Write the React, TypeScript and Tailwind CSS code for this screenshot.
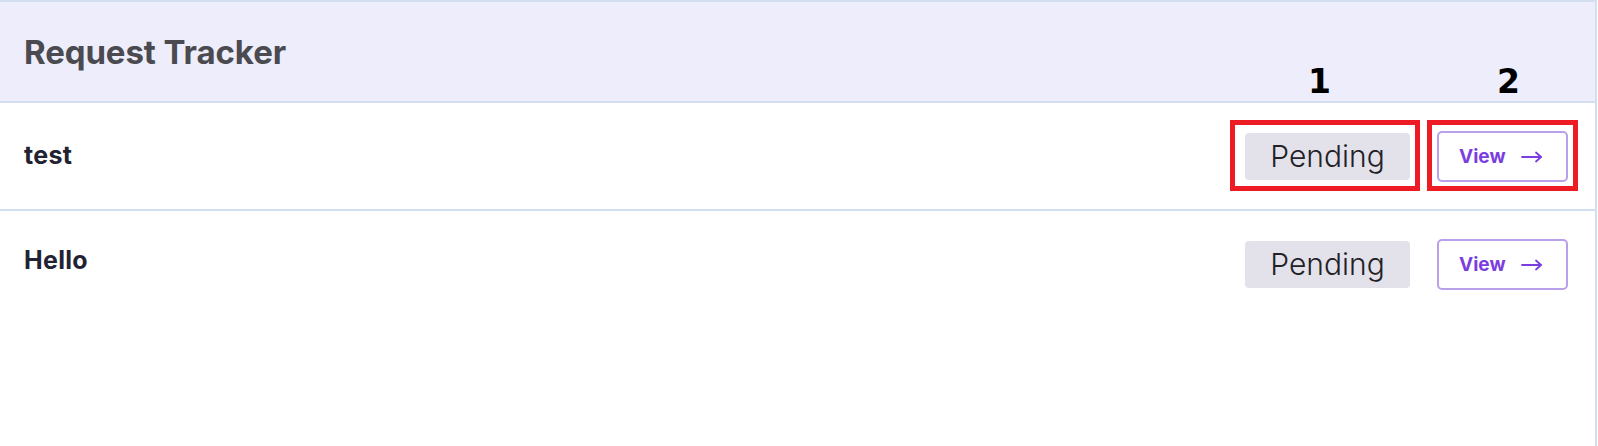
import React from "react";

const rows = ["test", "Hello"];

function Arrow() {
  return (
    <svg width="22" height="12" viewBox="0 0 22 12" fill="none" stroke="currentColor" strokeWidth="1.8" strokeLinecap="round" strokeLinejoin="round">
      <path d="M1 6h19" />
      <path d="M15 1.5l5 4.5-5 4.5" />
    </svg>
  );
}

function Row({ label, last }: { label: string; last?: boolean }) {
  return (
    <div
      className={
        "flex items-center justify-between pl-6 pr-[27px] " +
        (last ? "h-[106px]" : "h-[108px] border-b-2 border-[#d3dff0]")
      }
    >
      <span className={"text-[25px] font-bold text-[#222232] tracking-[0.3px] " + (last ? "mb-[6px]" : "")}>{label}</span>
      <div className="flex items-center gap-[27px]">
        <span className="flex items-center h-[47px] w-[165px] justify-center rounded-[4px] bg-[#e3e1ea] text-[30px] leading-none font-light text-[#222226]">
          Pending
        </span>
        <button className="flex items-center h-[51px] w-[131px] pl-[20px] pt-[1px] gap-[15px] rounded-[5px] border-2 border-[#b9a0ea] bg-white text-[#7a3ee0]">
          <span className="text-[19px] font-bold leading-none">View</span>
          <Arrow />
        </button>
      </div>
    </div>
  );
}

export default function App() {
  return (
    <div className="relative w-[1598px] h-[446px] bg-white font-['Inter',_sans-serif] overflow-hidden">
      <div className="mr-[1px] h-full border-t-2 border-r-2 border-[#d3dff0]">
        <div className="flex items-center h-[101px] pl-6 pt-[2px] bg-[#eeedfb] border-b-2 border-[#d3dff0]">
          <h1 className="text-[33px] font-bold text-[#4a4a50] tracking-[-0.1px]">Request Tracker</h1>
        </div>
        {rows.map((r, i) => (
          <Row key={r} label={r} last={i === rows.length - 1} />
        ))}
      </div>

      {/* annotation overlays */}
      <div className="absolute left-[1230px] top-[120px] w-[190px] h-[71px] border-[5px] border-[#ed1c24]" />
      <div className="absolute left-[1427px] top-[120px] w-[151px] h-[71px] border-[5px] border-[#ed1c24]" />
      <span className="absolute left-[1308px] top-[63px] text-[33px] leading-[38px] font-bold text-black font-['DejaVu_Sans',_sans-serif]">1</span>
      <span className="absolute left-[1497px] top-[63px] text-[33px] leading-[38px] font-bold text-black font-['DejaVu_Sans',_sans-serif]">2</span>
    </div>
  );
}
